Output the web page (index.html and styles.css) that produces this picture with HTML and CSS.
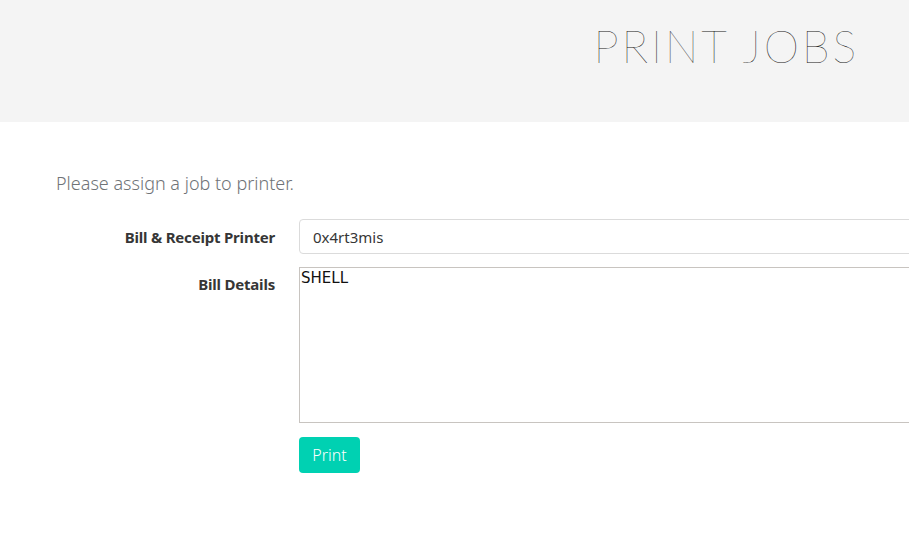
FILE: index.html
```html
<!DOCTYPE html>
<html>
<head>
<meta charset="utf-8">
<link rel="stylesheet" href="styles.css">
</head>
<body>
<header class="hero">
  <h1 class="title">PRINT JOBS</h1>
</header>
<main class="content">
  <p class="intro">Please assign a job to printer.</p>
  <form class="form">
    <div class="row row-input">
      <label class="label">Bill &amp; Receipt Printer</label>
      <input class="input" type="text" value="0x4rt3mis">
    </div>
    <div class="row">
      <label class="label label-top">Bill Details</label>
      <textarea class="textarea">SHELL</textarea>
    </div>
    <div class="row">
      <span class="label"></span>
      <button class="button" type="button">Print</button>
    </div>
  </form>
</main>
</body>
</html>
```
FILE: styles.css
```css
html, body {
  margin: 0;
  padding: 0;
  overflow: hidden;
  background: #fff;
  font-family: "Noto Sans", "Open Sans", sans-serif;
  color: #363636;
}
.hero {
  background: #f4f4f4;
  height: 122px;
  display: flex;
  justify-content: flex-end;
  align-items: flex-start;
}
.title {
  margin: 18px 50px 0 0;
  font-family: "Lato", sans-serif;
  font-weight: 100;
  font-size: 45px;
  letter-spacing: 2.8px;
  color: #141414;
  line-height: 56px;
}
.content {
  padding: 46px 0 0 56px;
}
.intro {
  margin: 0 0 21px 0;
  font-size: 18px;
  font-weight: 300;
  color: #6f7377;
  line-height: 30px;
}
.form {
  display: flex;
  flex-direction: column;
  gap: 13px;
}
.row {
  display: flex;
  align-items: flex-start;
  gap: 24px;
}
.row-input {
  align-items: center;
}
.label {
  width: 219px;
  flex: none;
  text-align: right;
  font-size: 15px;
  font-weight: 700;
  color: #363636;
  letter-spacing: -0.2px;
}
.label-top {
  padding-top: 7px;
}
.input {
  box-sizing: border-box;
  width: 700px;
  height: 35px;
  border: 1px solid #dbdbdb;
  border-radius: 4px;
  padding: 0 13px;
  font-family: "Noto Sans", "Open Sans", sans-serif;
  font-size: 15px;
  color: #363636;
  flex: none;
}
.textarea {
  box-sizing: border-box;
  width: 700px;
  height: 156px;
  border: 1px solid #c8c4c0;
  padding: 1px 1px;
  margin: 0;
  font-family: "DejaVu Sans", sans-serif;
  font-size: 15px;
  color: #111;
  resize: none;
  flex: none;
}
.button {
  margin-top: 1px;
  background: #00d1b2;
  color: #fff;
  border: none;
  border-radius: 4px;
  width: 61px;
  height: 36px;
  font-family: "Noto Sans", "Open Sans", sans-serif;
  font-size: 16px;
  font-weight: 300;
  padding: 0;
}
```
